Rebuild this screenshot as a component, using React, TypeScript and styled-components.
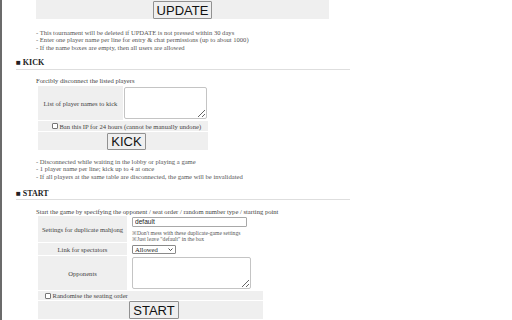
import React from "react"
import styled, { createGlobalStyle } from "styled-components"

const GlobalStyle = createGlobalStyle`
	html, body {
		margin: 0;
		padding: 0;
		background: #fff;
	}
	body {
		font-family: "Liberation Serif", "Times New Roman", serif;
		color: #333;
	}
`

const Page = styled.div`
	height: 320px;
	overflow: hidden;
	box-sizing: border-box;
	border-left: 2px solid #6b6b6b;
	padding-left: 14px;
`

const Indent = styled.div`
	margin-left: 20px;
`

const ButtonBar = styled.div`
	width: 293px;
	height: 19px;
	background: #efefef;
	display: flex;
	justify-content: center;
	align-items: flex-end;
`

const BigButton = styled.button<{ $height?: number }>`
	font-family: "Liberation Sans", Arial, sans-serif;
	font-size: 13px;
	line-height: 15px;
	height: ${(p) => p.$height ?? 18}px;
	padding: 0 3px;
	margin: 0;
	border: 1px solid #919191;
	border-radius: 1px;
	background: #efefef;
	color: #111;
	box-sizing: border-box;
`

const Notes = styled.div<{ $top: number }>`
	margin-top: ${(p) => p.$top}px;
	font-size: 6.6px;
	line-height: 7.7px;
	color: #555;
`

const Heading = styled.h3<{ $top: number }>`
	margin: ${(p) => p.$top}px 0 0;
	width: 334px;
	font-size: 8px;
	line-height: 10px;
	padding-bottom: 0.5px;
	font-weight: bold;
	color: #222;
	border-bottom: 1px solid #dedede;
`

const Lead = styled.div<{ $top: number }>`
	margin-top: ${(p) => p.$top}px;
	font-size: 6.6px;
	line-height: 7.7px;
	color: #444;
`

const FormTable = styled.table<{ $width: number }>`
	border-collapse: separate;
	border-spacing: 1px;
	width: ${(p) => p.$width}px;
	margin-left: 1px;
	font-size: 6.6px;
	color: #444;
`

const LabelCell = styled.td<{ $width: number; $height: number }>`
	width: ${(p) => p.$width}px;
	height: ${(p) => p.$height}px;
	padding: 0;
	background: #efefef;
	text-align: center;
	vertical-align: middle;
`

const FieldCell = styled.td<{ $pad: number }>`
	padding: 0 0 0 ${(p) => p.$pad}px;
	vertical-align: middle;
`

const WideCell = styled.td<{ $height: number }>`
	height: ${(p) => p.$height}px;
	padding: 0 0 0 7px;
	background: #efefef;
	text-align: ${(p) => (p.$height > 14 ? "center" : "left")};
	vertical-align: middle;
`

const CheckLabel = styled.label<{ $center?: boolean }>`
	display: flex;
	align-items: center;
	justify-content: ${(p) => (p.$center ? "center" : "flex-start")};
	gap: 1.5px;
`

const Check = styled.input`
	appearance: none;
	width: 6px;
	height: 6px;
	margin: 0;
	border: 0.8px solid #767676;
	border-radius: 1px;
	background: #fff;
	box-sizing: border-box;
`

const TextArea = styled.textarea<{ $width: number }>`
	display: block;
	width: ${(p) => p.$width}px;
	height: 32px;
	margin: 0;
	padding: 1px;
	box-sizing: border-box;
	border: 1px solid #c4c4c4;
	border-radius: 2px;
	font-size: 6.6px;
	resize: both;
`

const TextInput = styled.input`
	display: block;
	width: 115px;
	height: 10px;
	margin: 0;
	padding: 0 2px;
	box-sizing: border-box;
	border: 0.8px solid #a8a8a8;
	border-radius: 1px;
	font-family: "Liberation Sans", Arial, sans-serif;
	font-size: 6.6px;
	color: #222;
`

const Hint = styled.div`
	margin-top: 3px;
	font-size: 5.6px;
	line-height: 6px;
	color: #555;
`

const SelectWrap = styled.div`
	position: relative;
	width: 44px;
`

const Select = styled.select`
	appearance: none;
	display: block;
	width: 44px;
	height: 9px;
	margin: 0;
	padding: 0 2px;
	box-sizing: border-box;
	border: 0.8px solid #8a8a8a;
	border-radius: 1px;
	background: #fff;
	font-family: "Liberation Serif", serif;
	font-size: 6.6px;
	line-height: 7px;
	color: #222;
`

const Chevron = styled.svg`
	position: absolute;
	right: 3px;
	top: 3px;
	width: 5px;
	height: 3px;
	pointer-events: none;
`

export default function App() {
	return (
		<>
			<GlobalStyle />
			<Page>
				<Indent>
					<ButtonBar>
						<BigButton>UPDATE</BigButton>
					</ButtonBar>
					<Notes $top={9.5}>
						<div>- This tournament will be deleted if UPDATE is not pressed within 30 days</div>
						<div>- Enter one player name per line for entry &amp; chat permissions (up to about 1000)</div>
						<div>- If the name boxes are empty, then all users are allowed</div>
					</Notes>
				</Indent>

				<Heading $top={6.7}>■ KICK</Heading>
				<Indent>
					<Lead $top={7.5}>Forcibly disconnect the listed players</Lead>
					<FormTable $width={172}>
						<tbody>
							<tr>
								<LabelCell $width={85} $height={34}>
									List of player names to kick
								</LabelCell>
								<FieldCell $pad={0}>
									<TextArea $width={83} />
								</FieldCell>
							</tr>
							<tr>
								<WideCell colSpan={2} $height={10}>
									<CheckLabel $center>
										<Check type="checkbox" />
										Ban this IP for 24 hours (cannot be manually undone)
									</CheckLabel>
								</WideCell>
							</tr>
							<tr>
								<WideCell colSpan={2} $height={18}>
									<BigButton $height={17}>KICK</BigButton>
								</WideCell>
							</tr>
						</tbody>
					</FormTable>
					<Notes $top={6.5}>
						<div>- Disconnected while waiting in the lobby or playing a game</div>
						<div>- 1 player name per line; kick up to 4 at once</div>
						<div>- If all players at the same table are disconnected, the game will be invalidated</div>
					</Notes>
				</Indent>

				<Heading $top={8}>■ START</Heading>
				<Indent>
					<Lead $top={7.6}>
						Start the game by specifying the opponent / seat order / random number type / starting point
					</Lead>
					<FormTable $width={227}>
						<tbody>
							<tr>
								<LabelCell $width={89} $height={26}>
									Settings for duplicate mahjong
								</LabelCell>
								<FieldCell $pad={4}>
									<TextInput defaultValue="default" />
									<Hint>
										<div>※Don't mess with these duplicate-game settings</div>
										<div>※Just leave "default" in the box</div>
									</Hint>
								</FieldCell>
							</tr>
							<tr>
								<LabelCell $width={89} $height={12}>
									Link for spectators
								</LabelCell>
								<FieldCell $pad={4}>
									<SelectWrap>
										<Select defaultValue="Allowed">
											<option>Allowed</option>
											<option>Not allowed</option>
										</Select>
										<Chevron viewBox="0 0 10 6">
											<path d="M1 1l4 4 4-4" fill="none" stroke="#222" strokeWidth="1.6" />
										</Chevron>
									</SelectWrap>
								</FieldCell>
							</tr>
							<tr>
								<LabelCell $width={89} $height={34}>
									Opponents
								</LabelCell>
								<FieldCell $pad={4}>
									<TextArea $width={119} />
								</FieldCell>
							</tr>
							<tr>
								<WideCell colSpan={2} $height={9}>
									<CheckLabel>
										<Check type="checkbox" />
										Randomise the seating order
									</CheckLabel>
								</WideCell>
							</tr>
							<tr>
								<WideCell colSpan={2} $height={18}>
									<BigButton>START</BigButton>
								</WideCell>
							</tr>
						</tbody>
					</FormTable>
				</Indent>
			</Page>
		</>
	)
}
